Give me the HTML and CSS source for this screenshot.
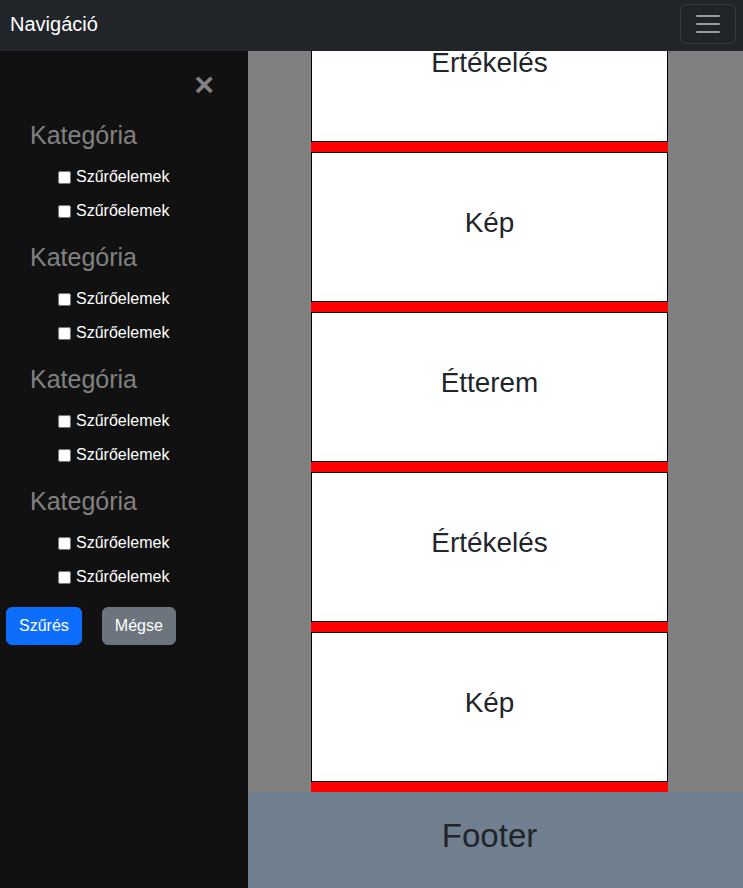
FILE: index.html
```html
<!DOCTYPE html>
<html lang="hu">
<head>
<meta charset="utf-8">
<title>Navigáció</title>
<link rel="stylesheet" href="styles.css">
</head>
<body>
<nav class="navbar">
  <span class="brand">Navigáció</span>
  <button class="toggler" type="button" aria-label="Menü">
    <svg width="30" height="30" viewBox="0 0 30 30"><path d="M4 7h22M4 15h22M4 23h22" stroke="rgba(255,255,255,0.55)" stroke-width="2" stroke-linecap="round" fill="none"/></svg>
  </button>
</nav>
<div class="layout">
  <aside class="sidenav">
    <div class="close-row"><a class="closebtn" href="#">×</a></div>
    <div class="group">
      <a class="cat" href="#">Kategória</a>
      <label class="item"><input type="checkbox"><span>Szűrőelemek</span></label>
      <label class="item"><input type="checkbox"><span>Szűrőelemek</span></label>
    </div>
    <div class="group">
      <a class="cat" href="#">Kategória</a>
      <label class="item"><input type="checkbox"><span>Szűrőelemek</span></label>
      <label class="item"><input type="checkbox"><span>Szűrőelemek</span></label>
    </div>
    <div class="group">
      <a class="cat" href="#">Kategória</a>
      <label class="item"><input type="checkbox"><span>Szűrőelemek</span></label>
      <label class="item"><input type="checkbox"><span>Szűrőelemek</span></label>
    </div>
    <div class="group">
      <a class="cat" href="#">Kategória</a>
      <label class="item"><input type="checkbox"><span>Szűrőelemek</span></label>
      <label class="item"><input type="checkbox"><span>Szűrőelemek</span></label>
    </div>
    <div class="actions">
      <button class="btn btn-primary" type="button">Szűrés</button>
      <button class="btn btn-secondary" type="button">Mégse</button>
    </div>
  </aside>
  <div class="main">
    <div class="cards">
      <div class="card-wrap"><div class="card"><h2>Értékelés</h2></div><div class="bar"></div></div>
      <div class="card-wrap"><div class="card"><h2>Kép</h2></div><div class="bar"></div></div>
      <div class="card-wrap"><div class="card"><h2>Étterem</h2></div><div class="bar"></div></div>
      <div class="card-wrap"><div class="card"><h2>Értékelés</h2></div><div class="bar"></div></div>
      <div class="card-wrap"><div class="card"><h2>Kép</h2></div><div class="bar"></div></div>
    </div>
    <footer class="footer"><h1>Footer</h1></footer>
  </div>
</div>
</body>
</html>
```
FILE: styles.css
```css
html, body {
  margin: 0;
  padding: 0;
}
body {
  font-family: "Liberation Sans", Arial, sans-serif;
  background: #808080;
  height: 888px;
  overflow: hidden;
  display: flex;
  flex-direction: column;
}
.navbar {
  flex: none;
  height: 51px;
  box-sizing: border-box;
  background: #212529;
  display: flex;
  align-items: center;
  justify-content: space-between;
  padding: 0 7px 3px 10px;
}
.brand {
  color: #fff;
  font-size: 20px;
  line-height: 30px;
}
.toggler {
  width: 56px;
  height: 40px;
  box-sizing: border-box;
  border: 1px solid rgba(255, 255, 255, 0.1);
  border-radius: 6px;
  background: transparent;
  padding: 0;
  display: flex;
  align-items: center;
  justify-content: center;
}
.toggler svg {
  display: block;
}
.layout {
  flex: 1;
  display: flex;
  min-height: 0;
}
.sidenav {
  flex: none;
  width: 248px;
  background: #111111;
}
.close-row {
  height: 57px;
  box-sizing: border-box;
  padding: 6px 34px 0 0;
  display: flex;
  justify-content: flex-end;
}
.closebtn {
  font-size: 34px;
  font-weight: bold;
  line-height: 54px;
  color: #818181;
  text-decoration: none;
}
.cat {
  display: block;
  padding: 8px 8px 8px 30px;
  font-size: 25px;
  line-height: 38px;
  color: #818181;
  text-decoration: none;
}
.item {
  display: flex;
  align-items: center;
  height: 34px;
  box-sizing: border-box;
  padding: 3px 0 7px 54px;
  color: #fff;
  font-size: 16px;
  line-height: 24px;
}
.item input {
  margin: 3px 3px 3px 4px;
  width: 13px;
  height: 13px;
}
.item span {
  margin-left: 2px;
}
.actions {
  display: flex;
  gap: 20px;
  padding-left: 6px;
  margin-top: 11px;
}
.btn {
  font-family: inherit;
  font-size: 16px;
  line-height: 24px;
  padding: 6px 12px;
  border: 1px solid transparent;
  border-radius: 6px;
  color: #fff;
}
.btn-primary {
  background: #0d6efd;
  border-color: #0d6efd;
}
.btn-secondary {
  background: #6c757d;
  border-color: #6c757d;
}
.main {
  flex: 1;
  display: flex;
  flex-direction: column;
  overflow: hidden;
  background: #808080;
}
.cards {
  flex: none;
  margin-top: -59px;
  padding-left: 63px;
  display: flex;
  flex-direction: column;
}
.card-wrap {
  width: 357px;
}
.card {
  height: 150px;
  box-sizing: border-box;
  border: 1px solid #000;
  background: #fff;
  display: flex;
  align-items: center;
  justify-content: center;
}
.card h2 {
  margin: 0 0 8px;
  font-size: 27.9px;
  line-height: 1.2;
  font-weight: 500;
  color: #212529;
}
.bar {
  height: 10px;
  background: #ff0000;
}
.footer {
  flex: 1;
  background: #708090;
  display: flex;
  align-items: center;
  justify-content: center;
  padding-right: 12px;
}
.footer h1 {
  margin: 0 0 8px;
  font-size: 33.1px;
  line-height: 1.2;
  font-weight: 500;
  color: #212529;
}
```
